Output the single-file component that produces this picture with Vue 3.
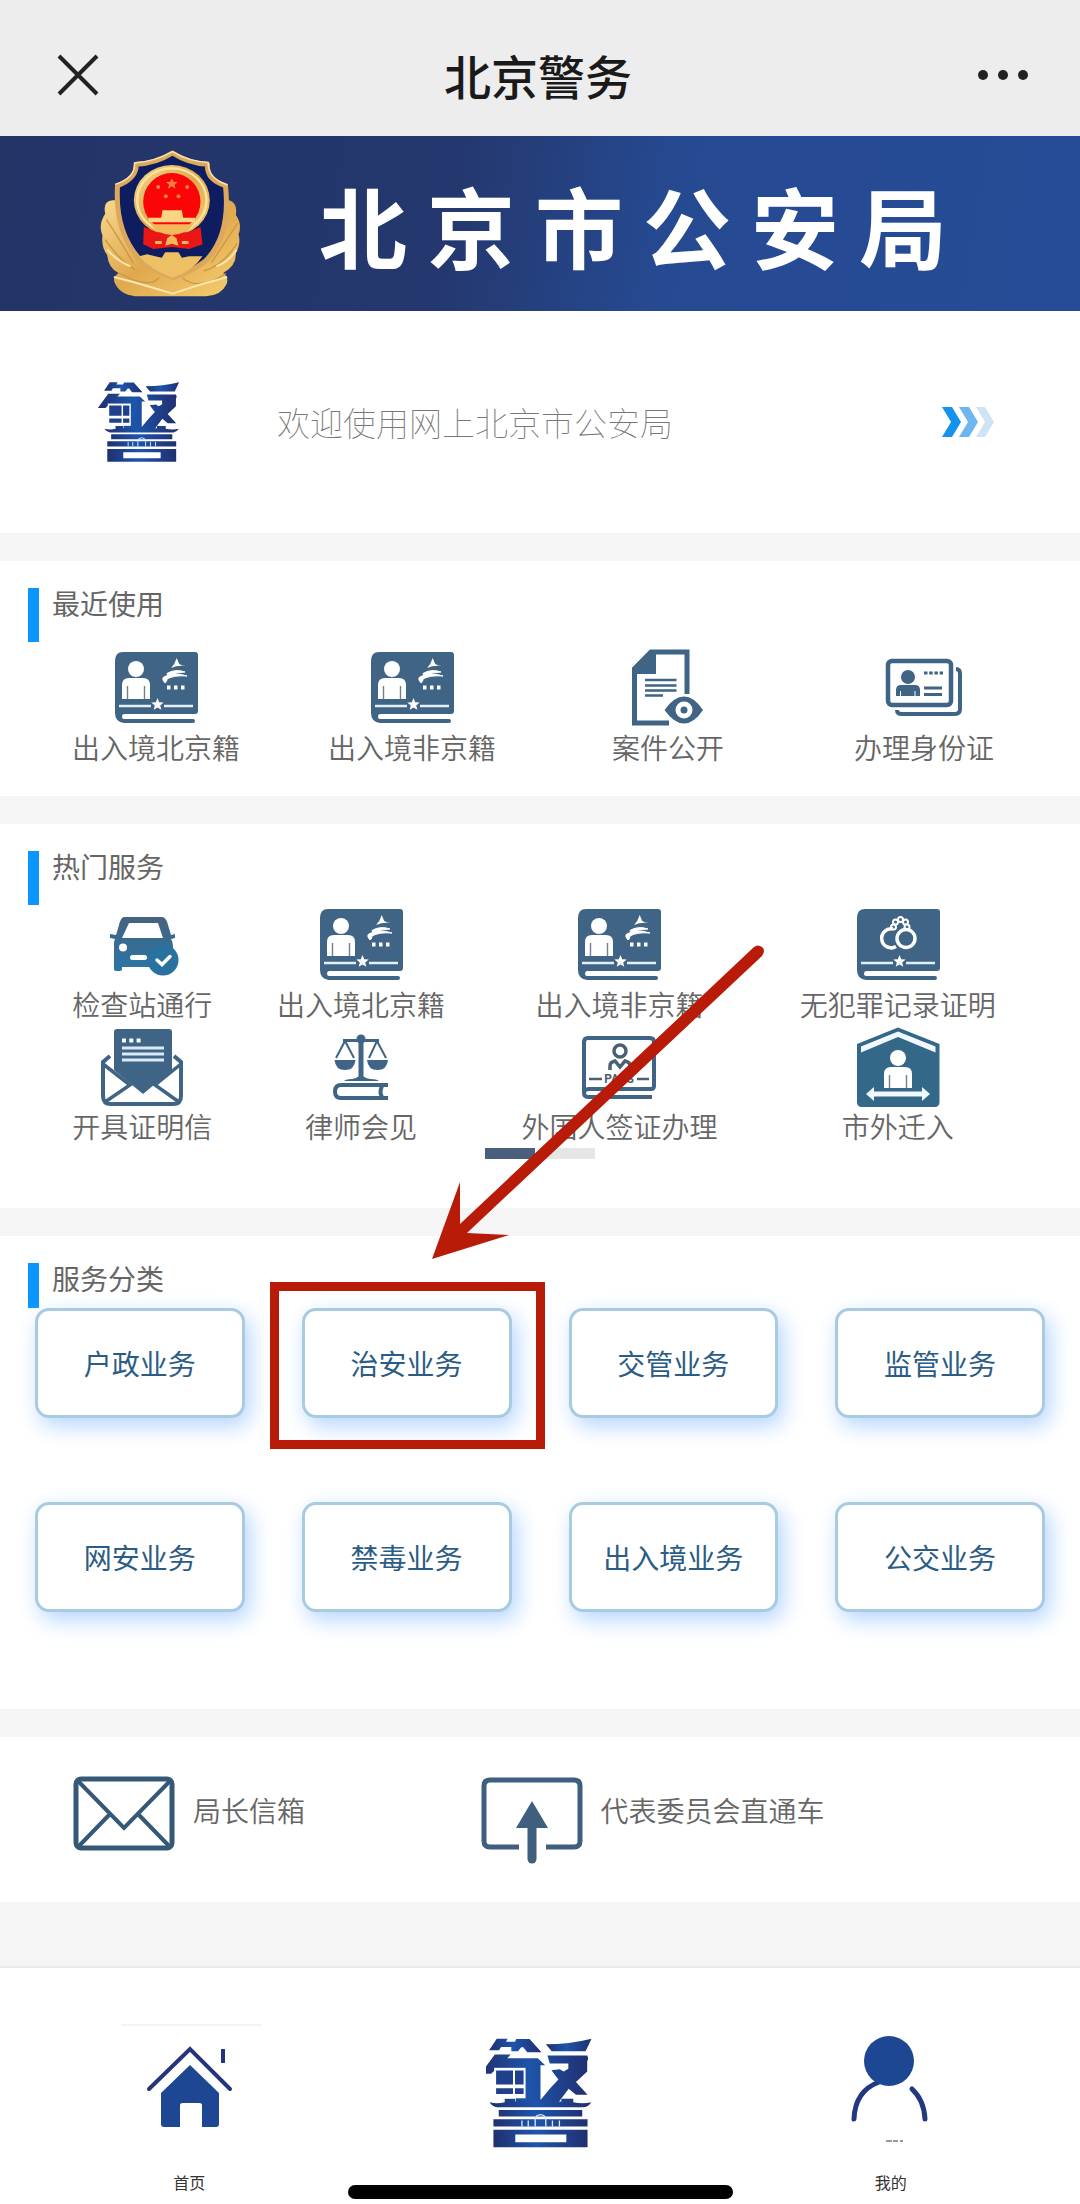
<template>
    <div class="page">
        <svg class="symbols" width="0" height="0" aria-hidden="true">
            <defs>
                <linearGradient id="logoFill" x1="0" y1="0" x2="1" y2="0">
                    <stop offset="0" stop-color="#20306f" />
                    <stop offset="0.45" stop-color="#1d55ab" />
                    <stop offset="1" stop-color="#212f70" />
                </linearGradient>
                <linearGradient id="goldFill" x1="0" y1="0" x2="1" y2="1">
                    <stop offset="0" stop-color="#f7d98c" />
                    <stop offset="0.5" stop-color="#e0a84e" />
                    <stop offset="1" stop-color="#f6d071" />
                </linearGradient>
                <linearGradient id="carFill" x1="0" y1="0" x2="0" y2="1">
                    <stop offset="0" stop-color="#46627f" />
                    <stop offset="1" stop-color="#2a75a8" />
                </linearGradient>
            </defs>

            <symbol id="icon-logo" viewBox="1150 110 322 338">
                <g fill="url(#logoFill)">
                    <path d="M1182 115h33l-5 9h27l4-8h40l36 40h-43l-12-15h-6l-10 12h-20v-13h-31l-6 10h-30z" />
                    <path d="M1176 163h48l-10 11h92l22 21h-14v105l30-36 24-26-21-28 25-3 12 7 14-8v-16h-56l-7-24h120l3 8-3 10v30l-34 32 35 38h-35l-22-18-30 40-22 14h-108v-107h-66l-8 8h-32z" />
                    <path d="M1330 132q70 0 138-17l-18 38h-102z" />
                    <path d="M1160 307q24 6 46 0v-11h31v9h140v-9h36v11q30 6 54 0-8 13-22 15h-262q-14-2-23-15z" />
                    <path d="M1188 330h252v20h-252zM1172 358h284v22h-284zM1172 390h284v53h-284z" />
                </g>
                <path d="M1174 203h95v92h-95z" fill="#fff" />
                <path d="M1180 211h51v42h-51zM1237 211h26v42h-26zM1180 265h51v17h-51zM1237 265h26v17h-26z" fill="#20408c" />
                <path d="M1238 404h154v24h-154z" fill="#fff" />
                <path d="M1258 362v18M1277 362v18M1298 380v-20a16 16 0 0 1 32 0v20M1350 362v18M1371 362v18" fill="none" stroke="#dbe7fa" stroke-width="4" />
            </symbol>

            <symbol id="icon-badge" viewBox="60 28 425 447">
                <path d="M100 182q-30 2-22 40-22 34-8 66-4 34 14 58 4 40 34 54-22 16-8 36 20 34 70 34h200q46-2 62-36 8-20-10-34 40-22 38-60 16-26 8-56 12-30-8-58 6-36-20-44z" fill="url(#goldFill)" />
                <path d="M82 240q40 60 80 130M78 300q50 70 90 90M120 400q90 50 120 14M476 250q-40 60-80 120M474 310q-40 66-100 84M440 402q-80 52-130 14" fill="none" stroke="#cf9442" stroke-width="4" />
                <path d="M104 412q80 20 176 50 80-28 164-50M84 330q30 34 70 50M472 330q-20 34-60 50" fill="none" stroke="#fbe7ae" stroke-width="6" />
                <path d="M280 40Q330 72 385 74q-4 46 54 64 16 150-60 226-44 34-96 50-60-18-102-56-74-80-66-220 58-22 56-64 58-2 109-34z" fill="#0e1c60" stroke="#dca85c" stroke-width="15" stroke-linejoin="round" />
                <path d="M280 36Q330 66 387 68q-2 48 58 68M280 36Q226 66 166 70q4 44-58 64" fill="none" stroke="#fae4b4" stroke-width="4" />
                <ellipse cx="278" cy="182" rx="114" ry="106" fill="url(#goldFill)" />
                <ellipse cx="278" cy="182" rx="104" ry="96" fill="none" stroke="#fae39f" stroke-width="7" />
                <circle cx="278" cy="186" r="86" fill="#fa0508" />
                <path d="M194 262l40 16h92l38-16 6 52-40 14-52-6-56 6-30-14z" fill="#ec1714" />
                <path d="M278 116l5 10 13 1-10 8 3 12-11-7-12 7 4-12-10-8 13-1z" fill="#f8803b" />
                <g fill="#f8803b">
                    <circle cx="237" cy="142" r="6" />
                    <circle cx="324" cy="142" r="6" />
                    <circle cx="260" cy="170" r="6" />
                    <circle cx="298" cy="170" r="6" />
                </g>
                <g fill="#f3b85c">
                    <path d="M250 212h58l4 22h36v14H208v-14h38z" fill="#fbd582" />
                    <path d="M214 254h130q-26 32-66 32t-64-32z" />
                    <path d="M264 296l14-10 14 10 6 22-20-6-20 6zM228 304h20v9h-20zM308 304h20v9h-20z" />
                </g>
                <path d="M180 350l24-6 24 6 20 4 10-16h40l10 16 22-4 40 0q-30 46-90 64-62-20-100-64z" fill="#edc064" />
            </symbol>

            <symbol id="icon-book" viewBox="0 0 84 84">
                <path d="M9 6h72q3 0 3 3v56q0 3-3 3H10q-2 0-2 2.500t2 2.500h69q2 0 2 2t-2 2H10q-9-1-9-10V15q0-9 8-9z" fill="#3f6485" />
                <path d="M5 60h32M50 60h29" stroke="#e4f0fb" stroke-width="2.400" />
                <path d="M43.500 52l1.700 4.200 4.500.3-3.500 2.900 1.100 4.400-3.800-2.400-3.800 2.400 1.100-4.400-3.500-2.900 4.500-.3z" fill="#fff" />
            </symbol>
            <symbol id="icon-person" viewBox="0 0 28 40">
                <circle cx="14" cy="9" r="8" fill="#fff" />
                <path d="M0 39V25q0-7 7-7h14q7 0 7 7v14z" fill="#fff" />
                <path d="M5.500 26v13M22.500 26v13" stroke="#6f8290" stroke-width="1.400" />
            </symbol>
            <symbol id="icon-passport" viewBox="0 0 84 84">
                <use href="#icon-book" />
                <use href="#icon-person" x="8" y="14" width="28" height="40" />
                <path d="M62.700 12l2.500 6q3 2 7 2-9-1-15 2 2-3 3-4z" fill="#fff" />
                <path d="M53 27.500q8-5 18-1.500-9 0-17 4zM49 34q-1-3 2-3.500 8-5 22-.5-13-1-20 3 0 3-2 4z" fill="#fff" stroke="#fff" />
                <path d="M53 39.500h3.500v4H53zM60 39.500h3.500v4H60zM67 39.500h3.500v4H67z" fill="#fff" />
            </symbol>
            <symbol id="icon-cuffs" viewBox="0 0 84 84">
                <use href="#icon-book" />
                <g fill="none" stroke="#fff">
                    <path d="M37 26a9.500 9.500 0 1 0 3 17.500" stroke-width="3.500" />
                    <circle cx="50" cy="35.500" r="9" stroke-width="3.500" />
                    <circle cx="37.500" cy="24" r="2.500" stroke-width="2" />
                    <circle cx="39.500" cy="19" r="2.500" stroke-width="2" />
                    <circle cx="44.500" cy="16.500" r="2.500" stroke-width="2" />
                    <circle cx="49.500" cy="19" r="2.500" stroke-width="2" />
                    <circle cx="51" cy="24" r="2.500" stroke-width="2" />
                </g>
            </symbol>
            <symbol id="icon-case" viewBox="0 0 84 84">
                <path d="M61 48V6H25L8.500 23v54H43" fill="none" stroke="#3f6485" stroke-width="5" />
                <path d="M24 4h6v24H6v-6z" fill="#3f6485" />
                <path d="M19 34h31.500M19 39.500h31.500M19 44.500h31.500M19 49.500h18" stroke="#3f6485" stroke-width="2.500" />
                <path d="M38.500 64Q48 50.500 58 50.500T77 64Q68 77.500 58 77.500T38.500 64z" fill="#3f6485" />
                <circle cx="58" cy="64" r="8.500" fill="#fff" />
                <circle cx="58" cy="64" r="3.500" fill="#3f6485" />
            </symbol>
            <symbol id="icon-idcard" viewBox="0 0 84 84">
                <g fill="none" stroke="#3f6485" stroke-width="4.500">
                    <rect x="6" y="15" width="63" height="44" rx="4" />
                    <path d="M74 23q4 0 4 5v35q0 5-5 5H20q-5 0-5-4" stroke-width="4" />
                </g>
                <circle cx="26" cy="31" r="7" fill="#3f6485" />
                <path d="M14 50v-6q0-5 5-5h14q5 0 5 5v6z" fill="#3f6485" />
                <path d="M18.500 45v5M33 45v5" stroke="#fff" />
                <path d="M42 42h18M42 48.500h18" stroke="#3f6485" stroke-width="2.800" />
                <path d="M42 27h19" stroke="#3f6485" stroke-width="3" stroke-dasharray="3.500 1.700" />
            </symbol>
            <symbol id="icon-car" viewBox="0 0 84 84">
                <path d="M24 14h38q4 0 6 8l3 10 4-1v4l-4 1q2 3 2 7v21H22v2q0 2-2 2h-4q-2 0-2-2V40q0-2 1-4l-5-1v-4l6 1 3-10q2-8 5-8z" fill="url(#carFill)" />
                <path d="M29 20h29l5 15H22z" fill="#fff" />
                <circle cx="23" cy="44.500" r="4" fill="#fff" />
                <rect x="30" y="52" width="17" height="5" rx="2.500" fill="#fff" />
                <circle cx="63" cy="57" r="15.500" fill="#29719f" />
                <path d="M57 57l5 4.500 8-8" fill="none" stroke="#fff" stroke-width="3.500" stroke-linecap="round" />
            </symbol>
            <symbol id="icon-letter" viewBox="0 0 84 84">
                <path d="M10 31l-7 6v34q0 8 8 8h62q8 0 8-8V37l-7-6" fill="none" stroke="#3f6485" stroke-width="4" />
                <path d="M3 39l27 21L5 77M81 39L55 60l24 17" fill="none" stroke="#3f6485" stroke-width="3.500" />
                <path d="M17 4h52q3 0 3 3v38L43 69 14 45V7q0-3 3-3z" fill="#3f6485" />
                <path d="M22 23h42M22 29h42M22 35h42" stroke="#dceaf7" stroke-width="2.800" />
                <path d="M22 15.500h20" stroke="#fff" stroke-width="4" stroke-dasharray="4 3.300" />
            </symbol>
            <symbol id="icon-scales" viewBox="0 0 84 84">
                <g fill="#3f6485">
                    <circle cx="42" cy="14" r="4.500" />
                    <path d="M39.500 14h5v40h-5zM25 56q2-2 8-2 5-1 9-4 4 3 9 4 7 0 9 2z" />
                    <path d="M15.500 35h21q-1 10-10.500 10T15.500 35zM48 35h21q-1 10-10.500 10T48 35z" />
                </g>
                <path d="M24 15.500h36" stroke="#3f6485" stroke-width="3" />
                <path d="M17 33l9-17 9 17M50 33l8-17 9 17" fill="none" stroke="#3f6485" stroke-width="2" />
                <path d="M69 60H22q-6 0-6 6.500t6 6.500h47M63 61q-3 6 0 11" fill="none" stroke="#3f6485" stroke-width="4" />
            </symbol>
            <symbol id="icon-visa" viewBox="0 0 84 84">
                <path d="M7 67V17q0-4 4-4h62q4 0 4 4v44q0 3-3 3H12q-5 0-5 4t5 4h63" fill="none" stroke="#3f6485" stroke-width="4" />
                <circle cx="43" cy="26" r="6" fill="none" stroke="#4c6074" stroke-width="3.500" />
                <path d="M33 45v-4q0-4 5-5l5 6 5-6q5 1 5 5v4" fill="none" stroke="#4c6074" stroke-width="3.500" />
                <path d="M12 54h13M60 54h12" stroke="#4c6074" stroke-width="2.500" />
            </symbol>
            <symbol id="icon-move" viewBox="0 0 84 84">
                <path d="M42 2.500L83.500 19v58q0 5-5 5H6q-5 0-5-5V19z" fill="#346889" />
                <path d="M5 27.500L42 12l37.500 15.500v-6L42 6.500 5 21.500z" fill="#f1f8ff" />
                <use href="#icon-person" x="28" y="24" width="28" height="40" />
                <path d="M10 69l8-7v4.500h48V62l8 7-8 7v-4.500H18V76z" fill="#f1f8ff" />
            </symbol>
        </svg>

        <header class="nav-bar">
            <button type="button" class="nav-btn" aria-label="关闭">
                <svg width="42" height="42" viewBox="0 0 42 42">
                    <path d="M2 2l38 38M40 2L2 40" stroke="#222" stroke-width="4" />
                </svg>
            </button>
            <h1>北京警务</h1>
            <button type="button" class="nav-btn" aria-label="更多">
                <svg width="52" height="12" viewBox="0 0 52 12" fill="#222">
                    <circle cx="6" cy="6" r="5" />
                    <circle cx="26" cy="6" r="5" />
                    <circle cx="46" cy="6" r="5" />
                </svg>
            </button>
        </header>

        <div class="banner">
            <svg class="badge"><use href="#icon-badge" /></svg>
            <h2>
                <span v-for="char in bureau" :key="char">{{ char }}</span>
            </h2>
        </div>

        <a href="#" class="welcome">
            <svg class="welcome-logo"><use href="#icon-logo" /></svg>
            <span class="welcome-text">欢迎使用网上北京市公安局</span>
            <svg width="54" height="32" viewBox="0 0 54 32">
                <path d="M1 1h10l9 15-9 15H1l9-15z" fill="#1492ec" />
                <path d="M18 1h10l9 15-9 15H18l9-15z" fill="#6fb6f0" />
                <path d="M35 1h9l9 15-9 15h-9l9-15z" fill="#d0e3f5" />
            </svg>
        </a>

        <section class="recent">
            <h3 class="section-title">最近使用</h3>
            <div class="recent-grid">
                <a v-for="item in recentList" :key="item.name" href="#" class="service">
                    <svg class="service-icon"><use :href="'#icon-' + item.icon" /></svg>
                    <span>{{ item.name }}</span>
                </a>
            </div>
        </section>

        <section class="hot">
            <h3 class="section-title">热门服务</h3>
            <div class="hot-grid">
                <a v-for="item in hotList" :key="item.name" href="#" class="service">
                    <svg class="service-icon" viewBox="0 0 84 84">
                        <use :href="'#icon-' + item.icon" />
                        <text v-if="item.mark" x="42" y="58" class="service-mark">{{ item.mark }}</text>
                    </svg>
                    <span>{{ item.name }}</span>
                </a>
            </div>
            <div class="pager">
                <i class="active"></i>
                <i></i>
            </div>
        </section>

        <section class="category">
            <h3 class="section-title">服务分类</h3>
            <ul class="category-grid">
                <li v-for="name in categories" :key="name">
                    <button type="button" class="category-btn">{{ name }}</button>
                    <template v-if="name === highlighted">
                        <div class="mark-box"></div>
                        <svg class="mark-arrow" width="336" height="318" viewBox="0 0 336 318" fill="#b81b08">
                            <path d="M323 5q4-3 8 0t0 9L36 291l42 2L1 317 29 240v42z" />
                        </svg>
                    </template>
                </li>
            </ul>
        </section>

        <section class="contact">
            <a href="#">
                <svg width="102" height="88" viewBox="0 0 102 88" fill="none" stroke="#355877" stroke-width="5">
                    <rect x="3" y="3" width="96" height="69" rx="5" />
                    <path d="M5 5l46 47L97 5M5 71l32-33M97 71L65 38" stroke-width="4" />
                </svg>
                <span>局长信箱</span>
            </a>
            <a href="#">
                <svg width="102" height="88" viewBox="0 0 102 88" fill="none" stroke="#3f5f7e" stroke-width="5">
                    <path d="M38 71H9q-6 0-6-6V10q0-6 6-6h84q6 0 6 6v55q0 6-6 6H65" />
                    <path d="M51 45v38" stroke-width="9" stroke-linecap="round" />
                    <path d="M51 25L35 52h32z" fill="#3f5f7e" stroke="none" />
                </svg>
                <span>代表委员会直通车</span>
            </a>
        </section>

        <nav class="tab-bar">
            <a href="#">
                <svg width="144" height="144" viewBox="-4 0 144 144">
                    <path d="M0 1h140" stroke="#f4f4f6" stroke-width="2" />
                    <path d="M28 65l41-40 40 40" fill="none" stroke="#25357d" stroke-width="4" stroke-linecap="round" />
                    <path d="M102 25v14" stroke="#25357d" stroke-width="4" />
                    <path d="M69 41l29 28v31q0 3-3 3H81V81q0-2-3-2H62q-3 0-3 2v22H43q-3 0-3-3V69z" fill="#1d4693" />
                </svg>
                <span>首页</span>
            </a>
            <a href="#" aria-label="警务">
                <svg class="tab-logo"><use href="#icon-logo" /></svg>
            </a>
            <a href="#">
                <svg width="144" height="144" viewBox="0 0 144 144">
                    <path d="M35 95q1-28 25-37M93 65q12 11 13 30" fill="none" stroke="#22387f" stroke-width="5" stroke-linecap="round" />
                    <circle cx="70" cy="37" r="25" fill="#1d4693" />
                    <path d="M67 117h6M74 117h5M81 117h3" stroke="#999" stroke-width="2" />
                </svg>
                <span>我的</span>
            </a>
            <div class="home-indicator"></div>
        </nav>
    </div>
</template>

<script setup>
const bureau = ['北', '京', '市', '公', '安', '局']

const recentList = [
    { name: '出入境北京籍', icon: 'passport' },
    { name: '出入境非京籍', icon: 'passport' },
    { name: '案件公开', icon: 'case' },
    { name: '办理身份证', icon: 'idcard' }
]

const hotList = [
    { name: '检查站通行', icon: 'car' },
    { name: '出入境北京籍', icon: 'passport' },
    { name: '出入境非京籍', icon: 'passport' },
    { name: '无犯罪记录证明', icon: 'cuffs' },
    { name: '开具证明信', icon: 'letter' },
    { name: '律师会见', icon: 'scales' },
    { name: '外国人签证办理', icon: 'visa', mark: 'PASS' },
    { name: '市外迁入', icon: 'move' }
]

const categories = [
    '户政业务', '治安业务', '交管业务', '监管业务',
    '网安业务', '禁毒业务', '出入境业务', '公交业务'
]

// 需要标注的业务
const highlighted = '治安业务'
</script>

<style>
body {
    margin: 0;
    background: #f5f5f5;
}
</style>

<style scoped>
.page {
    font-family: "Noto Sans CJK SC", sans-serif;
    font-size: 28px;
    line-height: 34px;
    color: #666;
}

.symbols {
    position: absolute;
}

svg {
    display: block;
    flex: none;
}

a {
    color: inherit;
    text-decoration: none;
}

h1,
h2,
h3,
ul {
    margin: 0;
    padding: 0;
}

.nav-bar {
    display: flex;
    align-items: center;
    justify-content: space-between;
    padding: 41px 51px 27px 57px;
    background: #ededed;
}

.nav-bar h1 {
    font-size: 47px;
    line-height: 68px;
    font-weight: 500;
    color: #1a1a1a;
}

.nav-btn {
    padding: 0;
    border: 0;
    background: none;
}

.banner {
    display: flex;
    align-items: center;
    gap: 78px;
    height: 175px;
    padding-left: 99px;
    background: linear-gradient(100deg, #233467 0%, #24386f 42%, #264a92 62%, #264c97 100%);
}

.badge {
    width: 142px;
    height: 149px;
}

.banner h2 {
    display: flex;
    gap: 20px;
    font-size: 88px;
    line-height: 120px;
    font-weight: 700;
    color: #fff;
}

.welcome {
    display: flex;
    align-items: center;
    height: 222px;
    padding: 0 85px 0 98px;
    background: #fff;
}

.welcome-logo {
    width: 86px;
    height: 82px;
}

.welcome-text {
    flex: 1;
    padding-left: 93px;
    font-size: 33px;
    font-weight: 100;
    color: #777;
}

section {
    margin-top: 28px;
    padding-top: 27px;
    background: #fff;
}

.section-title {
    display: flex;
    gap: 13px;
    margin-left: 28px;
    font-size: 28px;
    line-height: 30px;
    font-weight: 400;
}

.section-title::before {
    content: "";
    width: 11px;
    height: 54px;
    background: #0a95ff;
}

.service {
    display: flex;
    flex-direction: column;
    align-items: center;
    font-weight: 350;
    white-space: nowrap;
}

.service-icon {
    width: 84px;
    height: 84px;
}

.service-mark {
    fill: #4c6074;
    font-family: Roboto, sans-serif;
    font-size: 12px;
    font-weight: 700;
    text-anchor: middle;
}

.recent {
    padding-bottom: 32px;
}

.recent-grid {
    display: grid;
    grid-template-columns: repeat(4, 1fr);
    margin-top: 4px;
    padding: 0 28px;
}

.hot {
    padding-bottom: 49px;
}

.hot-grid {
    display: grid;
    grid-template-columns: 23fr 21fr 31fr 25fr;
    row-gap: 4px;
    margin-top: -2px;
    padding: 0 58px 0 28px;
}

.pager {
    display: flex;
    justify-content: center;
    gap: 10px;
    margin-top: 5px;
}

.pager i {
    width: 50px;
    height: 11px;
    background: #e6e6e6;
}

.pager .active {
    background: #4a5f7d;
}

.category {
    padding-bottom: 97px;
}

.category .section-title::before {
    height: 45px;
}

.category-grid {
    display: grid;
    grid-template-columns: repeat(4, 1fr);
    gap: 84px 57px;
    padding: 0 35px;
    list-style: none;
}

.category-grid li {
    position: relative;
}

.category-btn {
    width: 100%;
    height: 110px;
    padding: 0;
    border: 3px solid #a8cbe0;
    border-radius: 14px;
    background: #fff;
    box-shadow: 5px 8px 22px #b4d5ff;
    font-family: inherit;
    font-size: 28px;
    color: #2b5c85;
}

.mark-box {
    position: absolute;
    top: -26px;
    right: -33px;
    bottom: -31px;
    left: -32px;
    border: 9px solid #b81b08;
}

.mark-arrow {
    position: absolute;
    bottom: 158px;
    left: 129px;
}

.contact {
    display: grid;
    grid-template-columns: 17fr 25fr;
    padding: 39px 0 38px 73px;
    font-weight: 350;
}

.contact a {
    display: flex;
    gap: 18px;
    line-height: 68px;
}

.tab-bar {
    position: relative;
    display: grid;
    grid-template-columns: repeat(3, 1fr);
    height: 180px;
    margin-top: 64px;
    padding: 56px 14px 0;
    border-top: 2px solid #e9e9e9;
    background: #fff;
    font-size: 16px;
    line-height: 28px;
    color: #333;
}

.tab-bar a {
    display: flex;
    flex-direction: column;
    align-items: center;
}

.tab-logo {
    width: 107px;
    height: 112px;
    margin-top: 13px;
}

.home-indicator {
    position: absolute;
    bottom: 5px;
    left: 50%;
    width: 385px;
    height: 14px;
    margin-left: -192px;
    border-radius: 7px;
    background: #000;
}
</style>
